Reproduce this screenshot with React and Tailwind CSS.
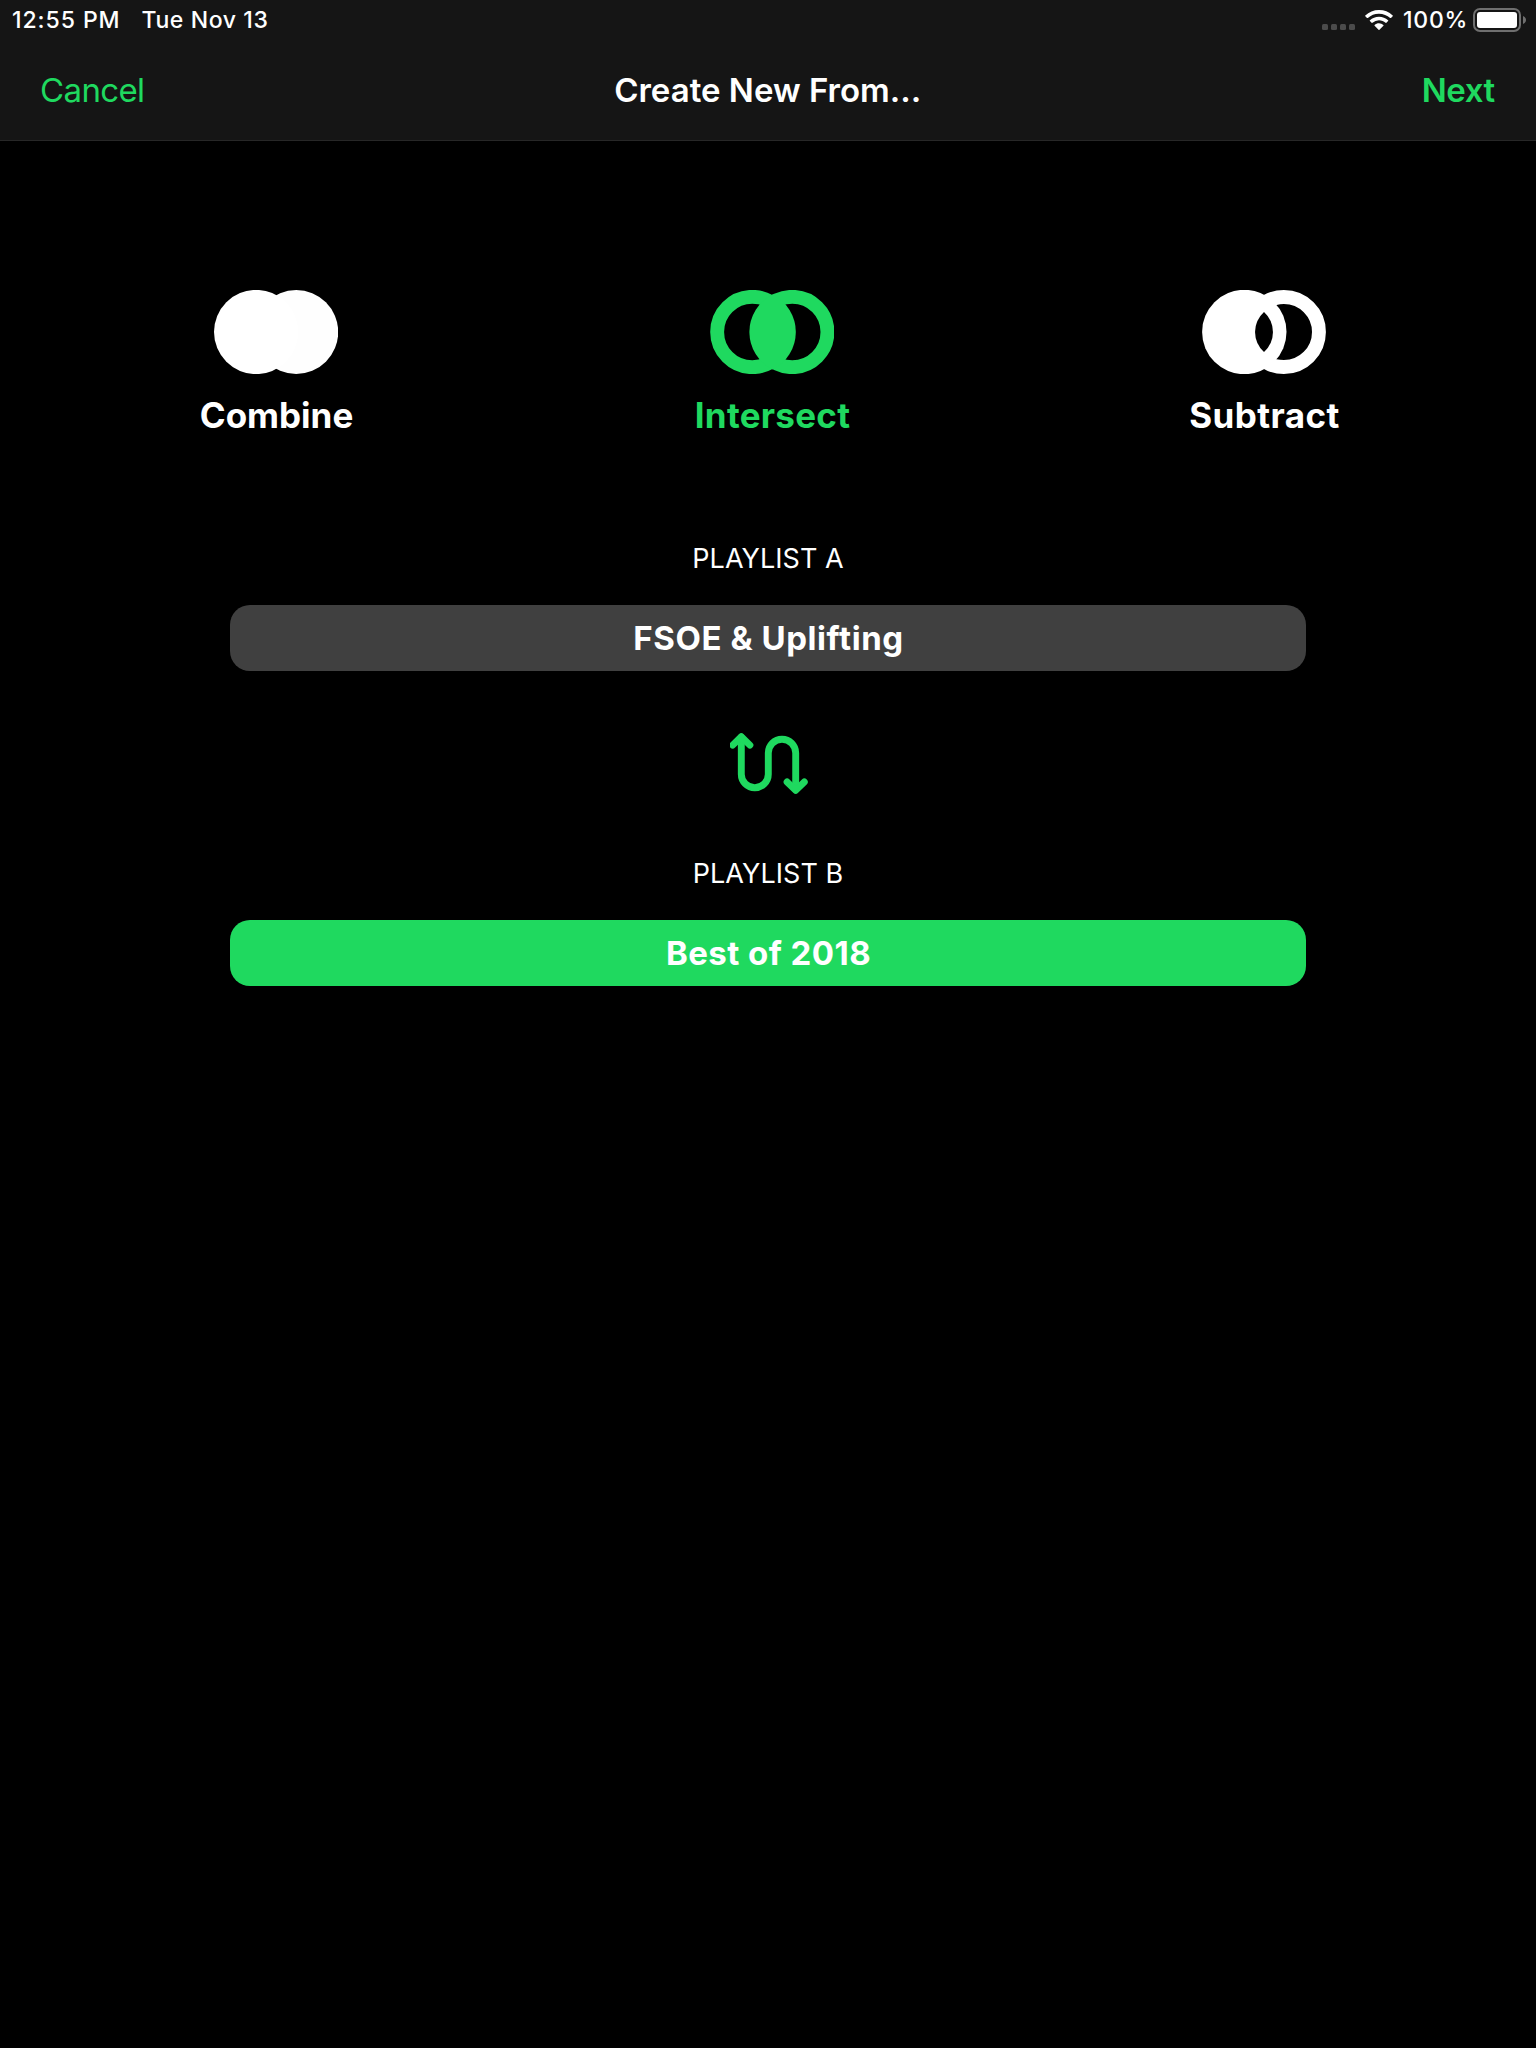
import React from "react";

function SignalDots() {
  return (
    <div className="mt-6 flex gap-[3px]">
      {[0, 1, 2, 3].map((i) => (
        <span key={i} className="h-1.5 w-1.5 rounded-[1.5px] bg-[#4b4b4b]" />
      ))}
    </div>
  );
}

function Wifi() {
  return (
    <svg className="ml-2.5 mt-2.5" width="28" height="20" viewBox="0 0 28 20" fill="#fff">
      <path d="M14 0C8.700 0 3.900 2.050 .3 5.400a.6.6 0 0 0 0 .88L2 7.950c.24.23.6.23.85 0A16.200 16.200 0 0 1 14 3.700c4.300 0 8.200 1.600 11.150 4.250.25.23.61.23.85 0l1.700-1.670a.6.6 0 0 0 0-.88A20 20 0 0 0 14 0Z" />
      <path d="M14 6.700c-3.500 0-6.700 1.330-9.100 3.500a.6.6 0 0 0 0 .88l1.730 1.700c.23.22.58.23.83.02A9.900 9.900 0 0 1 14 10.300c2.500 0 4.750.93 6.540 2.500.25.21.6.2.83-.02l1.730-1.700a.6.6 0 0 0 0-.88A13.500 13.500 0 0 0 14 6.700Z" />
      <path d="M14 13.300c-1.700 0-3.230.62-4.400 1.650a.55.55 0 0 0 0 .8l3.950 3.950c.25.25.65.25.9 0l3.950-3.950a.55.55 0 0 0 0-.8A6.650 6.650 0 0 0 14 13.300Z" />
    </svg>
  );
}

function Battery() {
  return (
    <svg className="mt-2" width="53" height="24" viewBox="0 0 53 24">
      <rect x="1" y="1" width="46" height="22" rx="6" fill="none" stroke="#6f6f6f" strokeWidth="2" />
      <rect x="4" y="4" width="40" height="16" rx="3" fill="#fff" />
      <path d="M50 8c1.800.7 3 2.250 3 4s-1.200 3.300-3 4Z" fill="#6f6f6f" />
    </svg>
  );
}

function CombineIcon() {
  return (
    <svg width="124" height="84" viewBox="0 0 124 84" fill="#fff">
      <circle cx="82.200" cy="42" r="42" fill="#fefefe" />
      <circle cx="42.100" cy="42" r="42.100" />
    </svg>
  );
}

function IntersectIcon() {
  return (
    <svg width="124" height="84" viewBox="0 0 124 84">
      <g fill="none" stroke="#1fd95f" strokeWidth="13.900">
        <circle cx="42.300" cy="42" r="35.150" />
        <circle cx="82.300" cy="42" r="35.150" />
      </g>
      <path d="M62.600 4.500a41.900 41.900 0 0 1 0 75a41.900 41.900 0 0 1 0-75Z" fill="#1fd95f" />
    </svg>
  );
}

function SubtractIcon() {
  return (
    <svg width="124" height="84" viewBox="0 0 124 84">
      <circle cx="81.900" cy="42" r="35.050" fill="none" stroke="#fff" strokeWidth="13.900" />
      <circle cx="42.300" cy="42" r="42.200" fill="#fff" />
      <path d="M62 22a26.800 26.800 0 0 1 0 40a26.800 26.800 0 0 1 0-40Z" fill="#000" />
    </svg>
  );
}

function SwapIcon() {
  return (
    <svg
      width="80"
      height="64"
      viewBox="0 0 80 64"
      fill="none"
      stroke="#1fd95f"
      strokeWidth="6.900"
      strokeLinecap="round"
      strokeLinejoin="round"
    >
      <path d="M11.300 6.500V43.200a13.500 13.500 0 0 0 27 0V22a13.700 13.700 0 0 1 27.400 0V58.500" />
      <path d="M2.700 14.100L11.300 5.700L19.900 14.100" />
      <path d="M57.100 51L65.700 59.400L74.300 51" />
    </svg>
  );
}

function Mode({ icon, label, className }) {
  return (
    <button className={"flex w-40 flex-col items-center " + className}>
      {icon}
      <span className="mt-[21px] pl-px text-[35px] leading-10 font-bold whitespace-nowrap">{label}</span>
    </button>
  );
}

function Playlist({ label, name, className }) {
  return (
    <div className="flex w-full flex-col items-center">
      <span className="text-[27px] leading-[33px] tracking-[0.05px]">{label}</span>
      <button
        className={
          "mt-[30px] flex h-[66px] w-full items-center justify-center rounded-[20px] pl-px text-[33px] leading-10 font-bold " +
          className
        }
      >
        {name}
      </button>
    </div>
  );
}

export default function App() {
  return (
    <div className="flex h-[2048px] w-[1536px] flex-col overflow-hidden bg-black font-[Inter,sans-serif] text-white">
      <header className="flex h-[141px] flex-col border-b border-[#272727] bg-[#151515]">
        <div className="flex h-10 items-start justify-between pr-2.5 pl-3 text-[23px] leading-7 font-medium">
          <div className="flex pt-1.5">
            <span className="w-[129.500px] tracking-[0.94px]">12:55 PM</span>
            <span className="tracking-[0.6px]">Tue Nov 13</span>
          </div>
          <div className="flex items-start">
            <SignalDots />
            <Wifi />
            <span className="mt-1.5 ml-2.5 w-[70px] tracking-[0.75px]">100%</span>
            <Battery />
          </div>
        </div>
        <nav className="flex pt-[30px] pr-[41.500px] pl-10 text-[33px] leading-10">
          <button className="flex-1 text-left tracking-[-0.62px] text-[#1fd95f]">Cancel</button>
          <h1 className="pl-px font-semibold tracking-[0.010px]">Create New From…</h1>
          <button className="flex-1 text-right font-semibold tracking-[-0.55px] text-[#1fd95f]">Next</button>
        </nav>
      </header>

      <main className="flex flex-col items-center">
        <div className="flex w-full pt-[149px] pl-[196px]">
          <Mode icon={<CombineIcon />} label="Combine" className="mr-[336px] tracking-[0px]" />
          <Mode icon={<IntersectIcon />} label="Intersect" className="mr-[332px] tracking-[0.27px] text-[#1fd95f]" />
          <Mode icon={<SubtractIcon />} label="Subtract" className="tracking-[0.43px]" />
        </div>

        <section className="mt-[107px] flex w-[1076px] flex-col items-center">
          <Playlist label="PLAYLIST A" name="FSOE & Uplifting" className="bg-[#404040] tracking-[0.56px]" />
          <button className="mt-[60px] mb-[62px] pl-[3px]">
            <SwapIcon />
          </button>
          <Playlist label="PLAYLIST B" name="Best of 2018" className="bg-[#1fd95f] tracking-[0.45px]" />
        </section>
      </main>
    </div>
  );
}
